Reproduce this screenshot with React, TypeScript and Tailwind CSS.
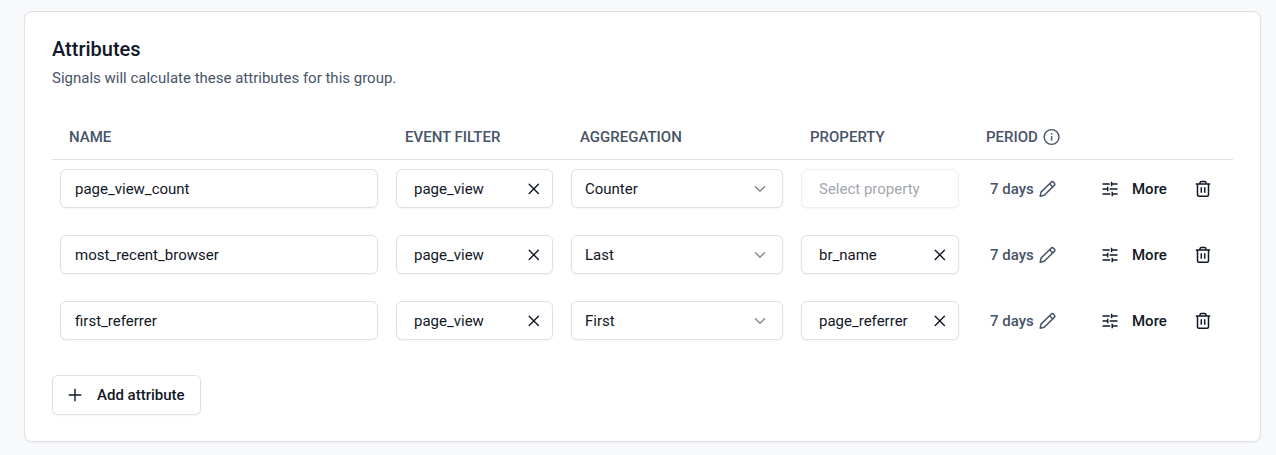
import React, { useState } from 'react';

type Attribute = {
  id: number;
  name: string;
  event: string;
  aggregation: string;
  property: string;
};

const initialAttributes: Attribute[] = [
  { id: 1, name: 'page_view_count', event: 'page_view', aggregation: 'Counter', property: '' },
  { id: 2, name: 'most_recent_browser', event: 'page_view', aggregation: 'Last', property: 'br_name' },
  { id: 3, name: 'first_referrer', event: 'page_view', aggregation: 'First', property: 'page_referrer' },
];

const aggregations = ['Counter', 'Sum', 'Min', 'Max', 'Mean', 'First', 'Last', 'Unique List'];

const CloseIcon = () => (
  <svg className="size-5" viewBox="0 0 20 20" fill="none" stroke="currentColor" strokeWidth={1.4} strokeLinecap="round">
    <path d="M5.2 5.2l9.2 9.2M14.4 5.2l-9.2 9.2" />
  </svg>
);

const ChevronIcon = ({ className }: { className?: string }) => (
  <svg className={className} viewBox="0 0 20 20" fill="none" stroke="currentColor" strokeWidth={1.4} strokeLinecap="round" strokeLinejoin="round">
    <path d="M4.4 7.7L9 12.2l4.6-4.5" />
  </svg>
);

const InfoIcon = () => (
  <svg className="size-5" viewBox="0 0 20 20" fill="none" stroke="currentColor" strokeWidth={1.4}>
    <circle cx="10.6" cy="10" r="7.4" />
    <path d="M10.6 9v4.6" />
    <path d="M10.6 6.2v1.5" />
  </svg>
);

const PencilIcon = () => (
  <svg className="size-5" viewBox="0 0 20 20" fill="none" stroke="currentColor" strokeWidth={1.5} strokeLinejoin="round">
    <path d="M3.2 17.2l.8-4.1L14.1 3.2a1.7 1.7 0 0 1 2.4 0l.8.8a1.7 1.7 0 0 1 0 2.4L7.2 16.3z" />
    <path d="M12.6 4.8l3.2 3.2" />
  </svg>
);

const TuneIcon = () => (
  <svg className="size-5" viewBox="0 0 20 20" fill="none" stroke="currentColor" strokeWidth={1.4}>
    <path d="M2.5 5h7.2M11.6 5h5.9M11.6 2.8v4.4" />
    <path d="M2.5 10h5.2M7.7 7.8v4.4M9.6 10h7.9" />
    <path d="M2.5 15h7.7M12.2 15h5.3M12.2 12.8v4.4" />
  </svg>
);

const TrashIcon = () => (
  <svg className="size-5" viewBox="0 0 20 20" fill="none" stroke="currentColor" strokeWidth={1.5}>
    <path d="M2.8 5h14.4" />
    <path d="M7 5V3.9c0-.8.5-1.3 1.3-1.3h3.4c.8 0 1.3.5 1.3 1.3V5" />
    <path d="M4.5 5v10.8c0 .9.6 1.5 1.5 1.5h8c.9 0 1.5-.6 1.5-1.5V5" />
    <path d="M8.3 8.2v5.6M11.7 8.2v5.6" />
  </svg>
);

const PlusIcon = () => (
  <svg className="size-5" viewBox="0 0 20 20" fill="none" stroke="currentColor" strokeWidth={1.4} strokeLinecap="round">
    <path d="M10 4.2v11.6M4.2 10h11.6" />
  </svg>
);

const HeaderCell = ({ children }: { children: React.ReactNode }) => (
  <th scope="col" className="pb-3 pl-[17px] text-left font-medium">
    <span className="flex items-center gap-[3px]">{children}</span>
  </th>
);

const ClearableField = ({ label, value, placeholder, onChange }: {
  label: string;
  value: string;
  placeholder: string;
  onChange: (value: string) => void;
}) => (
  <div className={`flex h-[39px] items-center rounded-md border bg-white pr-2 pl-[17px] shadow-xs ${value ? 'border-[#dfe1e6]' : 'border-[#eeeff2]'}`}>
    <input
      aria-label={label}
      value={value}
      placeholder={placeholder}
      disabled={!value}
      onChange={(e) => onChange(e.target.value)}
      className="w-full min-w-0 outline-none placeholder:text-[#a3a7af]"
    />
    {value && (
      <button type="button" aria-label={`Clear ${label}`} onClick={() => onChange('')} className="shrink-0">
        <CloseIcon />
      </button>
    )}
  </div>
);

const AttributeRow = ({ attribute, onChange, onDelete }: {
  attribute: Attribute;
  onChange: (patch: Partial<Attribute>) => void;
  onDelete: () => void;
}) => (
  <tr>
    <td className="pt-[9px] pr-2.5 pb-[18px] pl-2">
      <input
        aria-label="Name"
        value={attribute.name}
        onChange={(e) => onChange({ name: e.target.value })}
        className="block h-[39px] w-full rounded-md border border-[#dfe1e6] bg-white px-3.5 shadow-xs outline-none"
      />
    </td>
    <td className="pt-[9px] pr-2.5 pb-[18px] pl-2">
      <ClearableField label="Event filter" value={attribute.event} placeholder="Select event" onChange={(event) => onChange({ event })} />
    </td>
    <td className="pt-[9px] pr-2.5 pb-[18px] pl-2">
      <div className="relative">
        <select
          aria-label="Aggregation"
          value={attribute.aggregation}
          onChange={(e) => onChange({ aggregation: e.target.value })}
          className="block h-[39px] w-full appearance-none rounded-md border border-[#dfe1e6] bg-white pr-10 pl-[13px] shadow-xs outline-none"
        >
          {aggregations.map((item) => <option key={item}>{item}</option>)}
        </select>
        <ChevronIcon className="pointer-events-none absolute top-2.5 right-3 size-5 text-[#85888f]" />
      </div>
    </td>
    <td className="pt-[9px] pr-2.5 pb-[18px] pl-2">
      <ClearableField label="Property" value={attribute.property} placeholder="Select property" onChange={(property) => onChange({ property })} />
    </td>
    <td className="pt-[9px] pb-[18px] pl-[21px]">
      <button type="button" aria-label="Edit period, 7 days" className="flex h-[39px] items-center gap-[3px] font-medium text-[#475467]">
        7 days
        <PencilIcon />
      </button>
    </td>
    <td className="pt-[9px] pb-[18px] pl-[15px]">
      <button type="button" className="flex h-[39px] items-center gap-3 font-medium">
        <TuneIcon />
        More
      </button>
    </td>
    <td className="pt-[9px] pb-[18px] pl-2">
      <button type="button" aria-label="Delete attribute" onClick={onDelete} className="flex h-[39px] items-center">
        <TrashIcon />
      </button>
    </td>
  </tr>
);

export default function App() {
  const [attributes, setAttributes] = useState<Attribute[]>(initialAttributes);

  const update = (id: number, patch: Partial<Attribute>) =>
    setAttributes((rows) => rows.map((row) => (row.id === id ? { ...row, ...patch } : row)));

  const remove = (id: number) => setAttributes((rows) => rows.filter((row) => row.id !== id));

  const add = () =>
    setAttributes((rows) => [
      ...rows,
      { id: Math.max(0, ...rows.map((row) => row.id)) + 1, name: '', event: '', aggregation: 'Counter', property: '' },
    ]);

  return (
    <main className="min-h-screen bg-[#f8f9fb] pt-[11px] pr-[15px] pb-[13px] pl-6 font-[Roboto,sans-serif] text-[15px] leading-5 text-[#111827]">
      <section className="rounded-lg border border-[#dfe1e6] bg-white px-[27px] pt-[25px] pb-[26px] shadow-xs">
        <h2 className="text-xl leading-6 font-medium">Attributes</h2>
        <p className="mt-[7px] text-[#475467]">Signals will calculate these attributes for this group.</p>

        <table className="mt-[39px] w-full table-fixed">
          <colgroup>
            <col />
            <col className="w-[175px]" />
            <col className="w-[230px]" />
            <col className="w-[176px]" />
            <col className="w-[116px]" />
            <col className="w-[100px]" />
            <col className="w-[48px]" />
          </colgroup>
          <thead className="border-b border-[#dfe1e6] text-[#475467]">
            <tr>
              <HeaderCell>NAME</HeaderCell>
              <HeaderCell>EVENT FILTER</HeaderCell>
              <HeaderCell>AGGREGATION</HeaderCell>
              <HeaderCell>PROPERTY</HeaderCell>
              <HeaderCell>PERIOD <InfoIcon /></HeaderCell>
              <td />
              <td />
            </tr>
          </thead>
          <tbody>
            {attributes.map((attribute) => (
              <AttributeRow
                key={attribute.id}
                attribute={attribute}
                onChange={(patch) => update(attribute.id, patch)}
                onDelete={() => remove(attribute.id)}
              />
            ))}
          </tbody>
        </table>

        <button
          type="button"
          onClick={add}
          className="mt-[17px] flex h-10 items-center gap-3 rounded-md border border-[#dfe1e6] bg-white pr-[15px] pl-3 font-medium shadow-xs"
        >
          <PlusIcon />
          Add attribute
        </button>
      </section>
    </main>
  );
}
